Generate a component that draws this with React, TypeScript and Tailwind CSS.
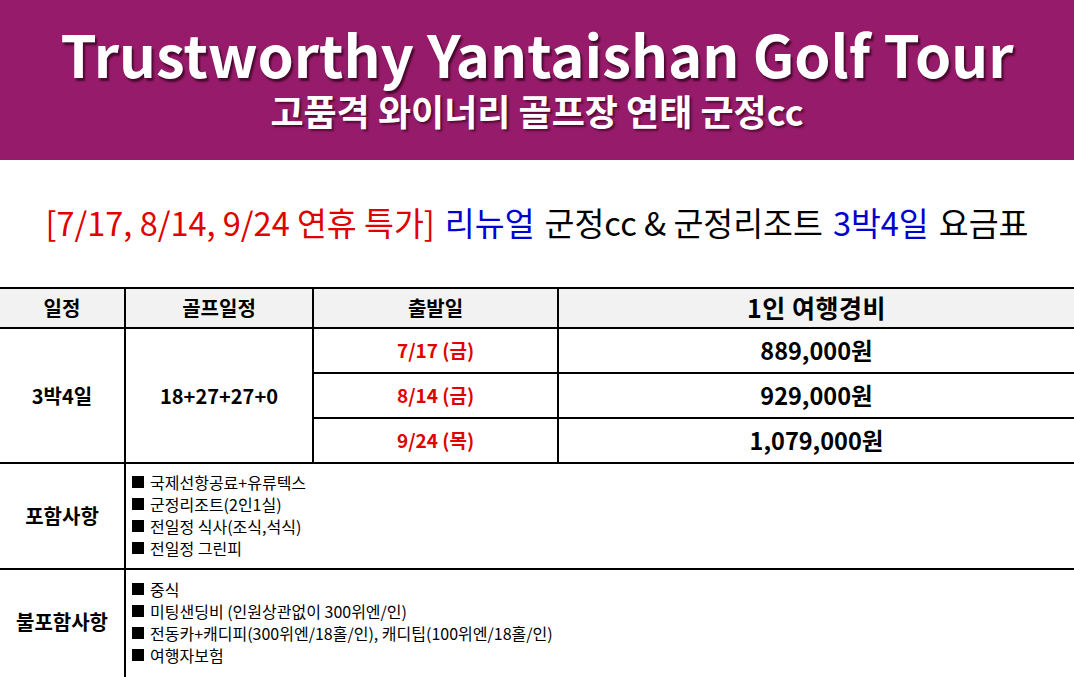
const font = "font-['Noto_Sans_CJK_KR','Noto_Sans',sans-serif]";

const dates = [
  { date: '7/17 (금)', price: '889,000원' },
  { date: '8/14 (금)', price: '929,000원' },
  { date: '9/24 (목)', price: '1,079,000원' },
];

const included = ['국제선항공료+유류텍스', '군정리조트(2인1실)', '전일정 식사(조식,석식)', '전일정 그린피'];
const excluded = [
  '중식',
  '미팅샌딩비 (인원상관없이 300위엔/인)',
  '전동카+캐디피(300위엔/18홀/인), 캐디팁(100위엔/18홀/인)',
  '여행자보험',
];

const ItemList = ({ items }: { items: string[] }) => (
  <ul className="text-[16px] leading-[22px] text-black">
    {items.map((item) => (
      <li key={item} className="flex items-center">
        <span className="mr-[6px] inline-block h-[12px] w-[12px] bg-black" />
        {item}
      </li>
    ))}
  </ul>
);

export default function App() {
  return (
    <div className={`${font} w-[1074px] h-[677px] overflow-hidden bg-white`}>
      <div className="h-[160px] bg-[#961b6a] flex flex-col items-center pt-[24px]">
        <h1 className="text-[58px] leading-[58px] font-bold text-white [text-shadow:2px_3px_2px_rgba(40,0,20,0.7)]">
          Trustworthy Yantaishan Golf Tour
        </h1>
        <p className="mt-[9px] text-[36px] leading-[38px] font-bold text-white [text-shadow:2px_2px_2px_rgba(40,0,20,0.6)]">
          고품격 와이너리 골프장 연태 군정cc
        </p>
      </div>

      <div className="h-[127px] flex items-center justify-center pb-[3px] text-[32.5px] text-black">
        <span className="text-[#e00000]">[7/17, 8/14, 9/24 연휴 특가]</span>
        <span className="ml-[10px] text-[#0000d0]">리뉴얼</span>
        <span className="ml-[10px]">군정cc &amp; 군정리조트</span>
        <span className="ml-[10px] text-[#0000d0]">3박4일</span>
        <span className="ml-[10px]">요금표</span>
      </div>

      <table className="w-full border-collapse table-fixed text-black">
        <colgroup>
          <col className="w-[125px]" />
          <col className="w-[188px]" />
          <col className="w-[245px]" />
          <col />
        </colgroup>
        <thead>
          <tr className="h-[40px] bg-[#f2f2f2] border-t-2 border-b-2 border-black">
            <th className="text-[20px] font-bold">일정</th>
            <th className="border-l-2 border-black text-[20px] font-bold">골프일정</th>
            <th className="border-l-2 border-black text-[20px] font-bold">출발일</th>
            <th className="border-l-2 border-black text-[25px] font-bold tracking-[0.5px]">1인 여행경비</th>
          </tr>
        </thead>
        <tbody>
          {dates.map((d, i) => (
            <tr key={d.date} className="h-[45px] border-b-2 border-black">
              {i === 0 && (
                <>
                  <td rowSpan={3} className="text-center text-[20px] font-bold">3박4일</td>
                  <td rowSpan={3} className="border-l-2 border-black text-center text-[20px] font-bold">18+27+27+0</td>
                </>
              )}
              <td className="border-l-2 border-black text-center text-[19px] font-bold text-[#e00000]">{d.date}</td>
              <td className="border-l-2 border-black text-center text-[23.5px] font-bold">{d.price}</td>
            </tr>
          ))}
          <tr className="h-[106px] border-b-2 border-black">
            <td className="text-center text-[20px] font-bold">포함사항</td>
            <td colSpan={3} className="border-l-2 border-black pl-[6px] pb-[2px] align-middle">
              <ItemList items={included} />
            </td>
          </tr>
          <tr className="h-[116px]">
            <td className="text-center text-[20px] font-bold pb-[12px]">불포함사항</td>
            <td colSpan={3} className="border-l-2 border-black pl-[6px] pb-[12px] align-middle">
              <ItemList items={excluded} />
            </td>
          </tr>
        </tbody>
      </table>
    </div>
  );
}
